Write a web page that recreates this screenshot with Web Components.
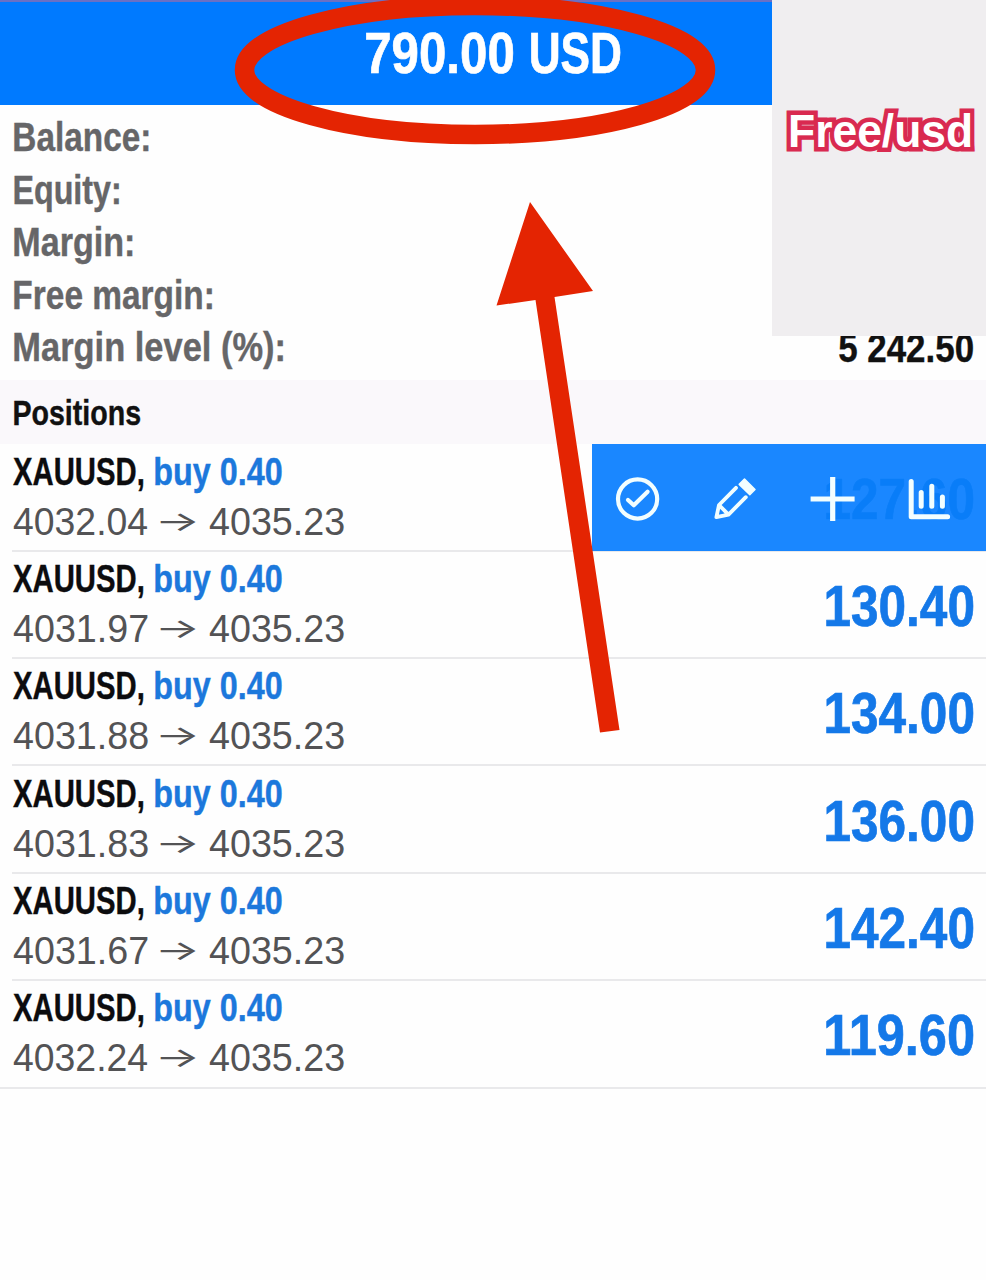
<!DOCTYPE html>
<html lang="en">
<head>
<meta charset="utf-8">
<title>Trade</title>
<style>
* { box-sizing: border-box; }
html, body { margin: 0; background: #fefefe; }
body { width: 986px; height: 1280px; overflow: hidden; font-family: "Liberation Sans", Arial, sans-serif; }
</style>
</head>
<body>
<trade-screen></trade-screen>

<script>
// ── Fit Text ────────────────────────────────────────────
// Condenses its text so that the drawn glyphs span exactly `span` pixels.
// Usage: <fit-text span="120">Label</fit-text>
const pen = document.createElement('canvas').getContext('2d');

class FitText extends HTMLElement {
    connectedCallback() {
        this.attachShadow({ mode: 'open' }).innerHTML = `
<style>
:host { display: block; flex: none; white-space: nowrap; }
.run { display: inline-block; transform-origin: 0 50%; vertical-align: top; }
</style>
<span class="run"><slot></slot></span>`;
        const span = Number(this.getAttribute('span'));
        const cs = getComputedStyle(this);
        pen.font = `${cs.fontWeight} ${cs.fontSize} ${cs.fontFamily}`;
        const m = pen.measureText(this.textContent.trim());
        const k = span / (m.actualBoundingBoxLeft + m.actualBoundingBoxRight);
        this.style.width = span + 'px';
        this.shadowRoot.querySelector('.run').style.transform =
            `translateX(${m.actualBoundingBoxLeft * k}px) scaleX(${k})`;
    }
}

// ── Header ──────────────────────────────────────────────
class ProfitHeader extends HTMLElement {
    connectedCallback() {
        this.attachShadow({ mode: 'open' }).innerHTML = `
<style>
:host {
    display: flex; justify-content: center; gap: 17px; height: 105px; padding-top: 21px;
    background: #007aff; border-top: 2px solid #6a70c4; box-sizing: border-box;
    color: #fff; font-size: 56.5px; font-weight: 700; line-height: 61px;
    -webkit-text-stroke: .7px #fff;
}
</style>
<fit-text span="147.5">${this.getAttribute('amount')}</fit-text>
<fit-text span="89.5">${this.getAttribute('currency')}</fit-text>`;
    }
}

// ── Account row ─────────────────────────────────────────
class AccountRow extends HTMLElement {
    connectedCallback() {
        const value = this.getAttribute('value');
        this.attachShadow({ mode: 'open' }).innerHTML = `
<style>
:host {
    display: flex; justify-content: space-between; height: 52.5px; padding: 0 13px 0 14px;
    font-size: 40.5px; font-weight: 700; line-height: 53px; color: #666668;
    -webkit-text-stroke: .4px currentColor; box-sizing: border-box;
}
.value { color: #111; font-size: 40px; line-height: 54px; }
</style>
<fit-text span="${this.getAttribute('span')}">${this.getAttribute('label')}</fit-text>
${value ? `<fit-text class="value" span="134">${value}</fit-text>` : ''}`;
    }
}

// ── Position row ────────────────────────────────────────
class PositionRow extends HTMLElement {
    connectedCallback() {
        this.attachShadow({ mode: 'open' }).innerHTML = `
<style>
:host { display: block; position: relative; height: 107.35px; padding-left: 12px; }
:host([last]) { padding-left: 0; }
.row {
    display: flex; justify-content: space-between; height: 108.3px; box-sizing: border-box;
    padding: 3px 13px 0 1px; border-bottom: 2px solid #e9e9eb;
}
:host([last]) .row { padding-left: 13px; }
.line { display: flex; align-items: center; }
.deal {
    height: 50px; font-size: 38.5px; line-height: 50px; font-weight: 700; color: #0c0c0e; gap: 11px;
    -webkit-text-stroke: .4px currentColor;
}
.side { color: #1c78dc; }
.price { height: 50px; font-size: 38px; line-height: 50px; color: #535355; gap: 12px; }
.to { font-family: Inter, "DejaVu Sans", sans-serif; font-size: 27px; height: 50px; }
.profit {
    font-size: 57px; font-weight: 700; line-height: 105px; color: #1478e8;
    -webkit-text-stroke: .7px currentColor;
}
:host([open-actions]) .profit { color: #3080a0; }
</style>
<div class="row">
    <div>
        <div class="line deal">
            <fit-text span="130.5">XAUUSD,</fit-text>
            <fit-text class="side" span="126.5">buy 0.40</fit-text>
        </div>
        <div class="line price">
            <fit-text span="135">${this.getAttribute('open')}</fit-text>
            <fit-text class="to" span="37">→</fit-text>
            <fit-text span="135">4035.23</fit-text>
        </div>
    </div>
    <fit-text class="profit" span="147.5">${this.getAttribute('profit')}</fit-text>
</div>
<slot></slot>`;
    }
}

// ── Swipe actions ───────────────────────────────────────
// Slides over the row, the profit shows through faintly.
class SwipeActions extends HTMLElement {
    connectedCallback() {
        this.attachShadow({ mode: 'open' }).innerHTML = `
<style>
:host {
    display: flex; align-items: center; gap: 53.5px; position: absolute;
    top: 0.5px; right: 0; width: 394.5px; height: 107px; padding: 2px 0 0 24px;
    box-sizing: border-box; background: rgba(6, 125, 255, .92);
}
svg {
    width: 44px; height: 44px; flex: none; overflow: visible;
    fill: none; stroke: #f2feff; stroke-linecap: round; stroke-linejoin: round;
}
</style>
<svg viewBox="0 0 44 44" stroke-width="4.2"><circle cx="21.6" cy="22" r="19.6"/><path d="M12 23 17.8 28.3 31.6 14.8"/></svg>
<svg viewBox="0 0 44 44" stroke-width="3.8">
    <path d="M23 10.8 6 28 3.4 40.2 15.5 37.6 32.8 20.2M6 28 15.5 37.6"/>
    <path d="M31.5 2 42 12.5 36.8 17.8 26.2 7.4Z" fill="#f2feff" stroke-width="1.5"/>
</svg>
<svg viewBox="0 0 44 44" stroke-width="5.2"><path d="M21.7 0V44M-.4 22H43.6" stroke-linecap="butt"/></svg>
<svg viewBox="0 0 44 44" stroke-width="5"><path d="M3.2 4.5V39.7H39.6M13.2 15.5V29.2M23.8 9.2V29.2M34.4 20V29.2"/></svg>`;
    }
}

// ── Sticker ─────────────────────────────────────────────
class CaptionPanel extends HTMLElement {
    connectedCallback() {
        this.attachShadow({ mode: 'open' }).innerHTML = `
<style>
:host {
    display: block; position: absolute; top: 0; right: 0; width: 214.5px; height: 336px;
    padding: 105px 0 0 19px; box-sizing: border-box; background: #f0eef0;
    font-size: 46px; font-weight: 700; line-height: 52px; color: #fff;
    -webkit-text-stroke: 9px #d92a50; paint-order: stroke fill; stroke-linejoin: round;
}
</style>
<fit-text span="180">${this.getAttribute('text')}</fit-text>`;
    }
}

// ── Marker ──────────────────────────────────────────────
class RedMarker extends HTMLElement {
    connectedCallback() {
        this.attachShadow({ mode: 'open' }).innerHTML = `
<style>
:host { display: block; position: absolute; inset: 0; pointer-events: none; }
svg { display: block; }
</style>
<svg width="986" height="1280" viewBox="0 0 986 1280">
    <ellipse cx="475" cy="70" rx="230.5" ry="64.5" fill="none" stroke="#e42402" stroke-width="19.5"/>
    <path d="M530 202 593 291 554.5 297 619.5 730 600 732.5 535.5 300 496.5 305.5Z" fill="#e42402"/>
</svg>`;
    }
}

// ── Screen ──────────────────────────────────────────────
class TradeScreen extends HTMLElement {
    connectedCallback() {
        this.attachShadow({ mode: 'open' }).innerHTML = `
<style>
:host { display: block; position: relative; height: 1280px; overflow: hidden; }
.account { height: 275px; padding-top: 6px; box-sizing: border-box; }
.title {
    height: 63.5px; padding: 2px 0 0 14px; box-sizing: border-box; background: #faf8fb;
    font-size: 35.5px; font-weight: 700; line-height: 62px; color: #111;
    -webkit-text-stroke: .4px #111;
}
</style>
<profit-header amount="790.00" currency="USD"></profit-header>
<div class="account">
    <account-row label="Balance:" span="134.5"></account-row>
    <account-row label="Equity:" span="105"></account-row>
    <account-row label="Margin:" span="118.5"></account-row>
    <account-row label="Free margin:" span="198"></account-row>
    <account-row label="Margin level (%):" span="269" value="5 242.50"></account-row>
</div>
<div class="title"><fit-text span="126.5">Positions</fit-text></div>
<position-row open="4032.04" profit="127.60" open-actions><swipe-actions></swipe-actions></position-row>
<position-row open="4031.97" profit="130.40"></position-row>
<position-row open="4031.88" profit="134.00"></position-row>
<position-row open="4031.83" profit="136.00"></position-row>
<position-row open="4031.67" profit="142.40"></position-row>
<position-row open="4032.24" profit="119.60" last></position-row>
<caption-panel text="Free/usd"></caption-panel>
<red-marker></red-marker>`;
    }
}

customElements.define('fit-text', FitText);
customElements.define('profit-header', ProfitHeader);
customElements.define('account-row', AccountRow);
customElements.define('position-row', PositionRow);
customElements.define('swipe-actions', SwipeActions);
customElements.define('caption-panel', CaptionPanel);
customElements.define('red-marker', RedMarker);
customElements.define('trade-screen', TradeScreen);
</script>
</body>
</html>
